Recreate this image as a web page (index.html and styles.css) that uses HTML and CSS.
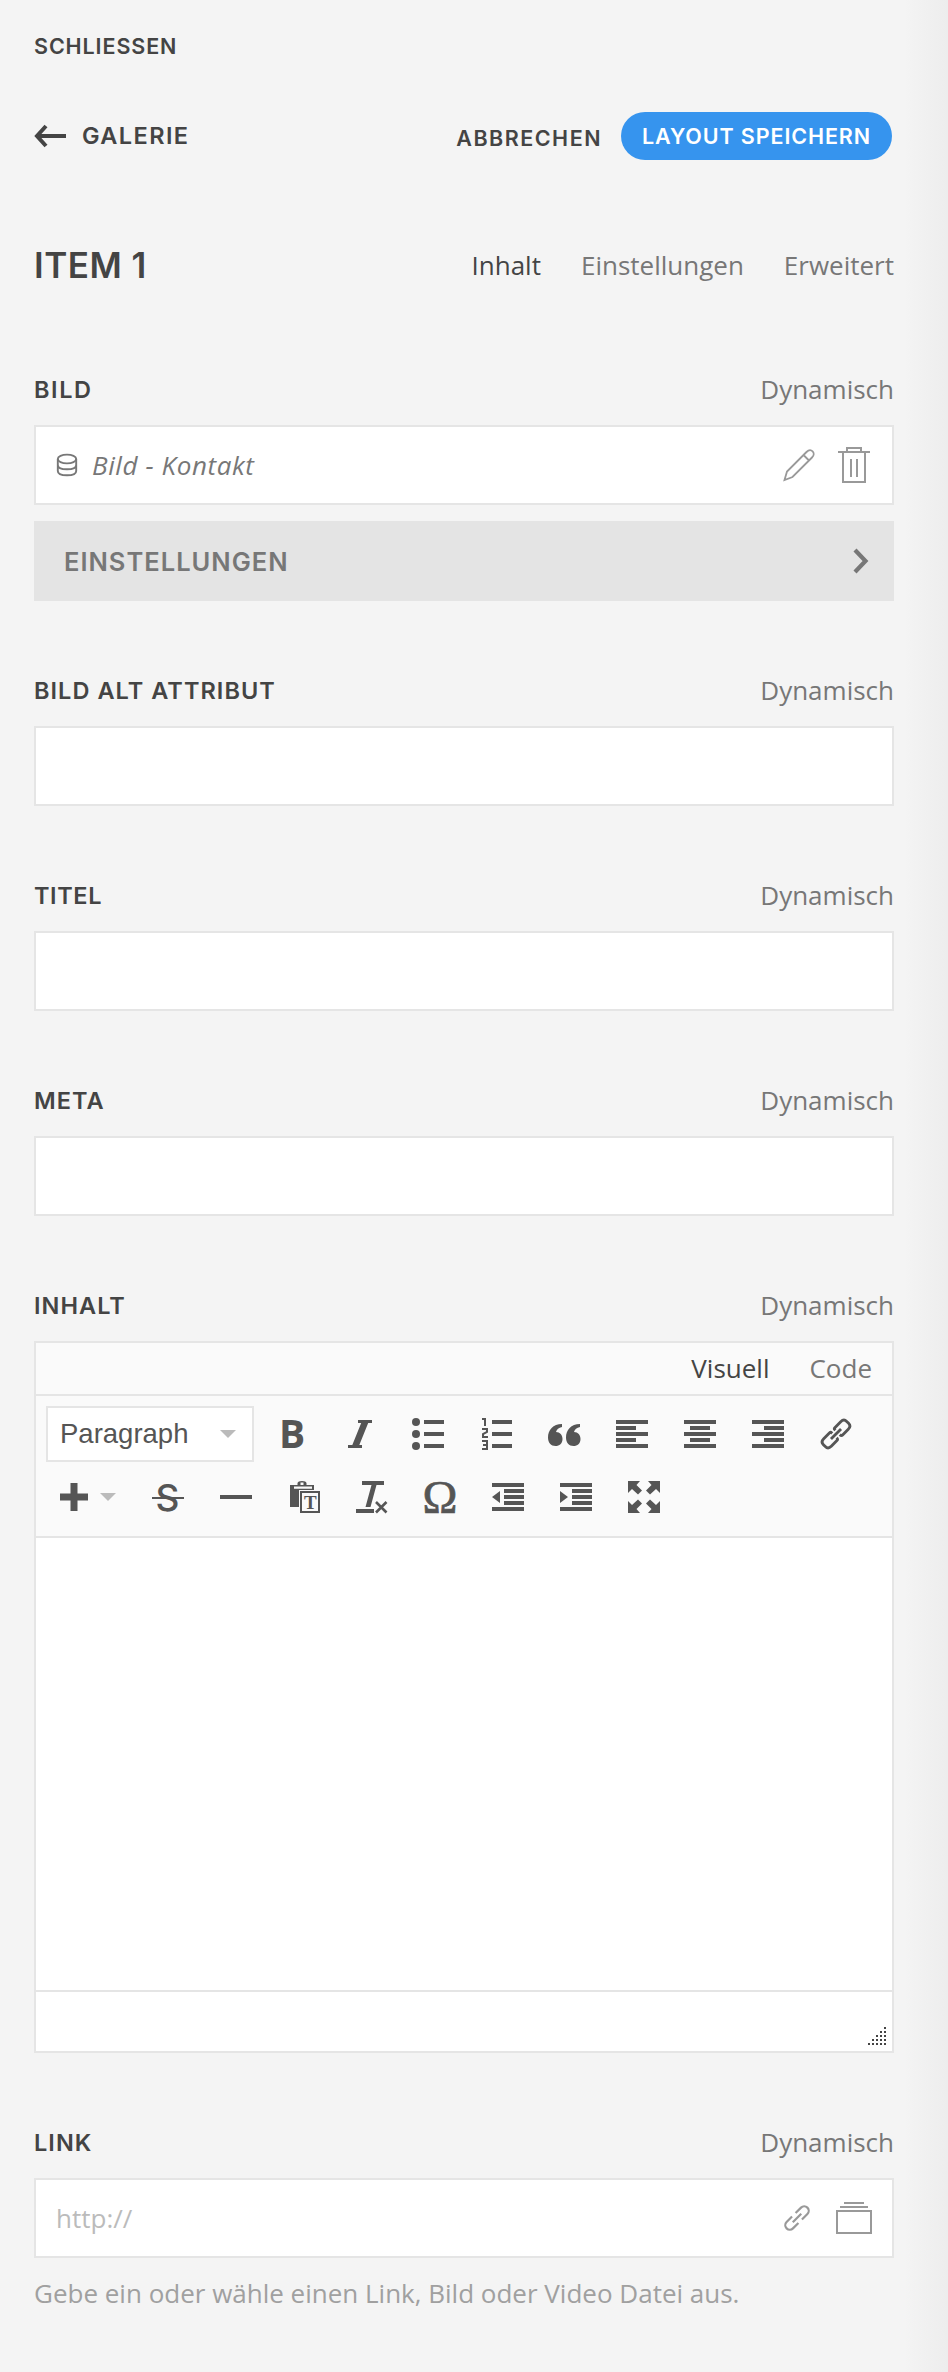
FILE: index.html
```html
<!DOCTYPE html>
<html lang="de">
<head>
<meta charset="utf-8">
<title>Item 1</title>
<link rel="stylesheet" href="styles.css">
</head>
<body>
<main class="panel">
  <a class="close caps">SCHLIESSEN</a>

  <header class="topbar">
    <a class="back">
      <svg width="32" height="24" viewBox="0 0 32 24"><path d="M3 12H32M12 2L3 12L12 22" fill="none" stroke="#444" stroke-width="4"/></svg>
      <span class="caps">GALERIE</span>
    </a>
    <div class="actions">
      <a class="cancel caps">ABBRECHEN</a>
      <button class="save caps">LAYOUT SPEICHERN</button>
    </div>
  </header>

  <div class="titlebar">
    <h1 class="title caps">ITEM 1</h1>
    <nav class="tabs"><a class="active">Inhalt</a><a>Einstellungen</a><a>Erweitert</a></nav>
  </div>

  <section class="field">
    <div class="field-head"><h2 class="caps wide">BILD</h2><a class="dynamic">Dynamisch</a></div>
    <div class="input">
      <svg width="22" height="24" viewBox="0 0 22 24" fill="none" stroke="#777" stroke-width="1.9"><ellipse cx="11" cy="6" rx="9.2" ry="4.4"/><path d="M1.8 6V18C1.8 21 6 22.3 11 22.3S20.2 21 20.2 18V6M1.8 12C1.8 15 6 16.3 11 16.3S20.2 15 20.2 12"/></svg>
      <em class="source">Bild - Kontakt</em>
      <span class="input-icons">
        <svg width="34" height="34" viewBox="0 0 34 34" fill="none" stroke="#999" stroke-width="1.8"><path d="M2.500 32L5 23.500L24.500 4C29-.5 34.500 5 30 9.500L10.500 29ZM21.500 7L27 12.500"/></svg>
        <svg width="36" height="38" viewBox="0 0 36 38" fill="none" stroke="#999" stroke-width="2"><path d="M2 6H34M7 6V36H29V6M11 6V2H25V6M15 13V31M21 13V31"/></svg>
      </span>
    </div>
    <button class="settings"><span class="caps">EINSTELLUNGEN</span>
      <svg width="16" height="26" viewBox="0 0 16 26"><path d="M2 2L12.500 13L2 24" fill="none" stroke="#777" stroke-width="4.200"/></svg>
    </button>
  </section>

  <section class="field">
    <div class="field-head"><h2 class="caps">BILD ALT ATTRIBUT</h2><a class="dynamic">Dynamisch</a></div>
    <div class="input"></div>
  </section>
  <section class="field">
    <div class="field-head"><h2 class="caps narrow">TITEL</h2><a class="dynamic">Dynamisch</a></div>
    <div class="input"></div>
  </section>
  <section class="field">
    <div class="field-head"><h2 class="caps">META</h2><a class="dynamic">Dynamisch</a></div>
    <div class="input"></div>
  </section>

  <section class="field">
    <div class="field-head"><h2 class="caps">INHALT</h2><a class="dynamic">Dynamisch</a></div>
    <div class="editor">
      <nav class="editor-tabs"><a class="active">Visuell</a><a>Code</a></nav>
      <div class="toolbar">
        <div class="row">
          <div class="select"><span>Paragraph</span><i class="caret"></i></div>
          <svg class="tool" viewBox="0 0 40 40"><text class="glyph-b" x="7" y="34">B</text></svg>
          <svg class="tool" viewBox="0 0 40 40"><path d="M18 6H32V9H18ZM8 31H22V34H8ZM22 7H29L18.500 33H11.500Z"/></svg>
          <svg class="tool" viewBox="0 0 40 40"><circle cx="8" cy="8" r="4"/><circle cx="8" cy="20" r="4"/><circle cx="8" cy="32" r="4"/><path d="M16 6h20v4H16zM16 18h20v4H16zM16 30h20v4H16z"/></svg>
          <svg class="tool" viewBox="0 0 40 40"><path d="M16 6h20v4H16zM16 18h20v4H16zM16 30h20v4H16z"/><path d="M6 5H9V12M6 15H11V18L7 20V23H12M6 27H11V35H6M7 31H11" fill="none" stroke="#555" stroke-width="2"/></svg>
          <svg class="tool" viewBox="0 0 40 40"><path d="M18 10V13Q13 14 12 18C16 18 18.500 21 18.500 25C18.500 29.500 15.500 32 11.500 32C7 32 4 28.500 4 23.500C4 16 9 10 18 10Z"/><path d="M36 10V13Q31 14 30 18C34 18 36.500 21 36.500 25C36.500 29.500 33.500 32 29.500 32C25 32 22 28.500 22 23.500C22 16 27 10 36 10Z"/></svg>
          <svg class="tool" viewBox="0 0 40 40"><path d="M4 6h32v4H4zM4 12h20v4H4zM4 18h32v4H4zM4 24h20v4H4zM4 30h32v4H4z"/></svg>
          <svg class="tool" viewBox="0 0 40 40"><path d="M4 6h32v4H4zM10 12h20v4H10zM4 18h32v4H4zM10 24h20v4H10zM4 30h32v4H4z"/></svg>
          <svg class="tool" viewBox="0 0 40 40"><path d="M4 6h32v4H4zM16 12h20v4H16zM4 18h32v4H4zM16 24h20v4H16zM4 30h32v4H4z"/></svg>
          <svg class="tool" viewBox="0 0 40 40"><g transform="rotate(-45 20 20) translate(20 20) scale(.89) translate(-20 -20)" fill="none" stroke="#555" stroke-width="3.200"><path d="M17.500 16.500V15.500Q17.500 14 15.500 14H6.500Q1.500 14 1.500 18.500V21.500Q1.500 26 6.500 26H15.500Q17.500 26 17.500 23.500M22.500 16.500V15.500Q22.500 14 24.500 14H33.500Q38.500 14 38.500 18.500V21.500Q38.500 26 33.500 26H24.500Q22.500 26 22.500 23.500M12 20H28"/></g></svg>
        </div>
        <div class="row second">
          <div class="add"><svg width="28" height="28" viewBox="0 0 28 28"><path d="M10.500 0H17.500V10.500H28V17.500H17.500V28H10.500V17.500H0V10.500H10.500Z" fill="#555"/></svg><i class="caret"></i></div>
          <svg class="tool" viewBox="0 0 40 40"><text class="glyph-s" x="19.500" y="33.500" text-anchor="middle">S</text><path d="M4 20h32v2H4z"/></svg>
          <svg class="tool" viewBox="0 0 40 40"><path d="M4 18h32v4H4z"/></svg>
          <svg class="tool" viewBox="0 0 40 40"><path d="M6 8H13.500V6Q14 4 18 4Q22 4 22.500 6V8H30V30H6Z"/><path d="M10 9.500H28V11.800H10ZM16.500 5.500H19.500V8H16.500Z" fill="#fafafa"/><rect x="15" y="13" width="21" height="23" fill="#fafafa"/><rect x="17" y="15" width="18" height="20" fill="#fafafa" stroke="#555" stroke-width="2"/><text class="glyph-t" x="26.300" y="31.500" text-anchor="middle">T</text></svg>
          <svg class="tool" viewBox="0 0 40 40"><path d="M10 4H32V8H10ZM4 32H22V36H4ZM19.500 8H24.500L18.500 30H13.500Z"/><path d="M24 25L34.500 35.500M34.500 25L24 35.500" stroke="#555" stroke-width="2.600"/></svg>
          <svg class="tool" viewBox="0 0 40 40"><text class="glyph-o" x="20" y="36" text-anchor="middle">Ω</text></svg>
          <svg class="tool" viewBox="0 0 40 40"><path d="M4 6h32v4H4zM16 12h20v4H16zM16 18h20v4H16zM16 24h20v4H16zM4 30h32v4H4zM12 14V26L4 20z"/></svg>
          <svg class="tool" viewBox="0 0 40 40"><path d="M4 6h32v4H4zM16 12h20v4H16zM16 18h20v4H16zM16 24h20v4H16zM4 30h32v4H4zM4 14V26L12 20z"/></svg>
          <svg class="tool" viewBox="0 0 40 40"><path d="M4 4H16L12.500 8L18 13.500L14 17.500L8 12L4 16ZM36 4V16L32 12L26 17.500L22 13.500L27.500 8L24 4ZM4 36V24L8 28L14 22.500L18 26.500L12.500 32L16 36ZM36 36H24L27.500 32L22 26.500L26 22.500L32 28L36 24Z"/></svg>
        </div>
      </div>
      <div class="editor-body"></div>
      <div class="statusbar"><svg width="18" height="18" viewBox="0 0 18 18"><path fill="#444" d="M16 0h2v2h-2zM12 4h2v2h-2zM16 4h2v2h-2zM8 8h2v2H8zM12 8h2v2h-2zM16 8h2v2h-2zM4 12h2v2H4zM8 12h2v2H8zM12 12h2v2h-2zM16 12h2v2h-2zM0 16h2v2H0zM4 16h2v2H4zM8 16h2v2H8zM12 16h2v2h-2zM16 16h2v2h-2z"/></svg></div>
    </div>
  </section>

  <section class="field">
    <div class="field-head"><h2 class="caps">LINK</h2><a class="dynamic">Dynamisch</a></div>
    <div class="input">
      <span class="placeholder">http://</span>
      <span class="input-icons link-icons">
        <svg width="30" height="30" viewBox="0 0 30 30"><g transform="rotate(-45 15 15)" fill="none" stroke="#999" stroke-width="2.200"><path d="M12.500 10.500H4.800A4.500 4.500 0 0 0 4.800 19.500H12.500M17.500 10.500H25.200A4.500 4.500 0 0 1 25.200 19.500H17.500M9 15H21"/></g></svg>
        <svg width="36" height="34" viewBox="0 0 36 34" fill="none" stroke="#999" stroke-width="2"><path d="M1 10H35V32H1ZM4 6H32M8 2H28"/></svg>
      </span>
    </div>
    <p class="help">Gebe ein oder wähle einen Link, Bild oder Video Datei aus.</p>
  </section>
</main>
</body>
</html>
```

FILE: styles.css
```css
* { box-sizing: border-box; }
body {
  margin: 0;
  background: #f4f4f4;
  color: #777;
  font: 26px/48px "Open Sans", "Noto Sans", sans-serif;
}
.panel {
  height: 2372px;
  padding: 22px 54px 0 34px;
  background: linear-gradient(to left, #ededed, #f4f4f4 44px);
}
svg { display: block; flex: none; }
h1, h2, p { margin: 0; }
button { border: 0; }
.caps {
  font-family: Inter, "Open Sans", sans-serif;
  font-weight: 600;
  color: #444;
  white-space: nowrap;
}
.close { display: block; height: 48px; font-size: 21.500px; letter-spacing: .9px; }
.topbar { display: flex; justify-content: space-between; margin-top: 42px; height: 48px; padding-right: 2px; }
.back { display: flex; align-items: center; gap: 16px; font-size: 23.500px; letter-spacing: 1.400px; }
.actions { display: flex; gap: 20px; }
.cancel { font-size: 21.500px; padding-top: 2px; letter-spacing: 1.500px; margin-right: -1px; }
.save { width: 271px; height: 48px; padding: 0; border-radius: 24px; background: #3694ee; color: #fff; font-size: 21.500px; line-height: 47px; text-align: center; letter-spacing: .9px; }
.titlebar { display: flex; justify-content: space-between; align-items: center; height: 60px; margin: 75px 0 70px; }
.title { font-size: 35px; letter-spacing: .5px; }
.tabs { display: flex; gap: 40px; }
.active { color: #444; }
.field { margin-bottom: 65px; }
.field-head { display: flex; justify-content: space-between; height: 60px; }
.field-head h2 { font-size: 23.500px; line-height: 50px; letter-spacing: 1.050px; }
.field-head .wide { letter-spacing: 1.600px; }
.field-head .narrow { letter-spacing: .6px; }
.input { display: flex; align-items: center; height: 80px; padding: 0 20px; border: 2px solid #e5e5e5; background: #fff; }
.source { margin-left: 14px; letter-spacing: .6px; }
.input-icons { display: flex; align-items: center; gap: 20px; margin-left: auto; }
.link-icons { gap: 24px; }
.settings { display: flex; align-items: center; justify-content: space-between; width: 100%; height: 80px; margin-top: 16px; padding: 0 25px 0 30px; background: #e4e4e4; }
.settings .caps { font-size: 25.500px; color: #777; letter-spacing: 1px; }
.editor { height: 712px; border: 2px solid #e5e5e5; background: #fff; display: flex; flex-direction: column; }
.editor-tabs { display: flex; justify-content: flex-end; gap: 40px; height: 53px; padding-right: 20px; background: #fafafa; border-bottom: 2px solid #e5e5e5; line-height: 50px; }
.toolbar { height: 142px; background: #fafafa; border-bottom: 2px solid #e5e5e5; padding: 10px; }
.row { display: flex; align-items: center; height: 56px; }
.second { margin-top: 7px; padding-left: 14px; }
.tool { width: 40px; height: 40px; margin: 0 14px; fill: #555; overflow: visible; }
.select { display: flex; align-items: center; justify-content: space-between; width: 208px; height: 56px; margin-right: 4px; padding: 0 16px 0 12px; border: 2px solid #e5e5e5; background: #fff; color: #555; font: 27.500px/40px "Liberation Sans", Arial, sans-serif; }
.caret { width: 0; height: 0; border: 8px solid transparent; border-top-color: #bbb; border-bottom: 0; }
.add { display: flex; align-items: center; gap: 12px; width: 74px; }
.glyph-b { font: 700 39px "Open Sans", sans-serif; }
.glyph-s { font: 500 37px Inter, sans-serif; }
.glyph-t { font: 700 19px "Liberation Serif", serif; }
.glyph-o { font: 400 47px "Liberation Serif", serif; stroke: #555; stroke-width: .7px; }
.editor-body { flex: 1; }
.statusbar { display: flex; justify-content: flex-end; align-items: flex-end; height: 61px; padding: 0 6px 6px; border-top: 2px solid #e5e5e5; }
.placeholder { color: #bbb; }
.help { margin-top: 11px; color: #a0a0a0; white-space: nowrap; }
```
